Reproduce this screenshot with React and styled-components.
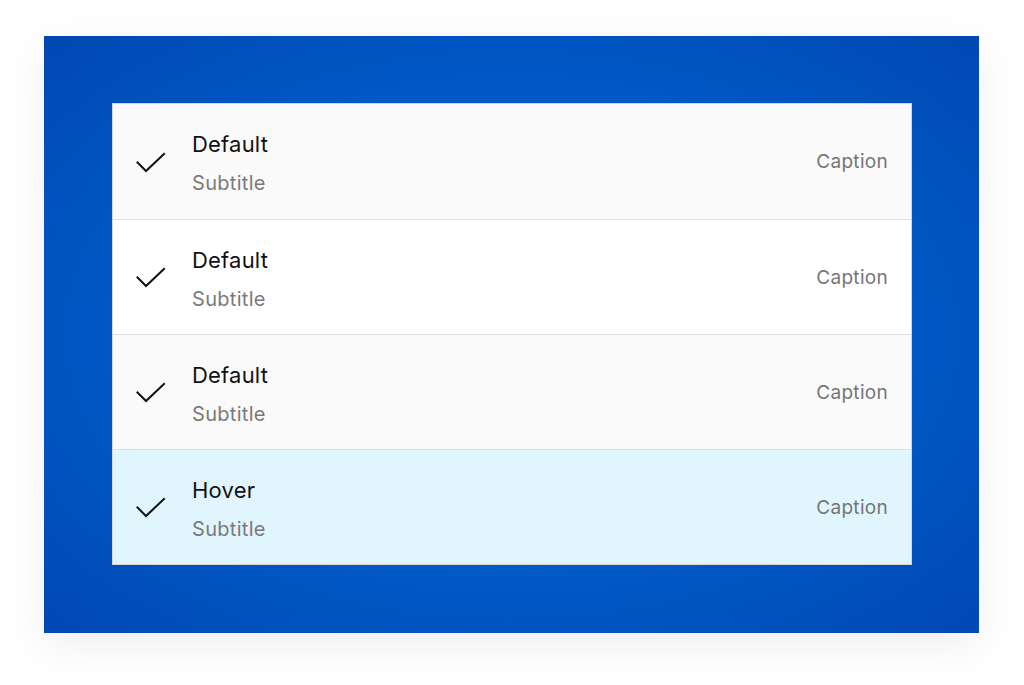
import React from "react";
import styled, { createGlobalStyle } from "styled-components";

const GlobalStyle = createGlobalStyle`
  body {
    margin: 0;
    background: #ffffff;
    font-family: "Inter", "Liberation Sans", sans-serif;
  }
`;

const items = [
  { title: "Default", subtitle: "Subtitle", caption: "Caption", tone: "muted" },
  { title: "Default", subtitle: "Subtitle", caption: "Caption", tone: "plain" },
  { title: "Default", subtitle: "Subtitle", caption: "Caption", tone: "muted" },
  { title: "Hover", subtitle: "Subtitle", caption: "Caption", tone: "hover" },
];

const tones = {
  muted: "#fafafa",
  plain: "#ffffff",
  hover: "#e1f5fe",
};

const CheckIcon = () => (
  <svg width="32" height="24" viewBox="0 0 32 24" fill="none">
    <polyline
      points="2.5,10.5 11,19 29,2"
      stroke="#111"
      strokeWidth="2"
      strokeLinecap="square"
    />
  </svg>
);

const App = () => {
  return (
    <>
      <GlobalStyle />
      <Page>
        <Panel>
          <List>
            {items.map((item, i) => (
              <Row key={i} $tone={item.tone}>
                <IconCell>
                  <CheckIcon />
                </IconCell>
                <Text>
                  <Title>{item.title}</Title>
                  <Subtitle>{item.subtitle}</Subtitle>
                </Text>
                <Caption>{item.caption}</Caption>
              </Row>
            ))}
          </List>
        </Panel>
      </Page>
    </>
  );
};

export default App;

const Page = styled.div`
  padding: 36px 0 0 44px;
  height: 685px;
  box-sizing: border-box;
`;

const Panel = styled.div`
  width: 935px;
  height: 597px;
  box-sizing: border-box;
  padding: 67px 67px 67px 68px;

  background: radial-gradient(
    ellipse at center,
    #006ad9 0%,
    #005cca 50%,
    #0048b3 100%
  );

  box-shadow: 0 12px 40px rgba(0, 0, 0, 0.07);
`;

const List = styled.div`
  display: flex;
  flex-direction: column;
  border: 1px solid #d6d6d6;
  background: #fff;
`;

const Row = styled.div`
  display: flex;
  align-items: center;
  height: 115px;
  box-sizing: border-box;
  padding: 0 23px 0 22px;

  background: ${(p) => tones[p.$tone]};
  border-top: 1px solid #e0e0e0;

  &:first-child {
    border-top: none;
  }
`;

const IconCell = styled.div`
  width: 57px;
  display: flex;
  align-items: center;
  margin-top: 4px;
`;

const Text = styled.div`
  flex: 1;
  display: flex;
  flex-direction: column;
  gap: 11px;
  margin-top: 4px;
`;

const Title = styled.div`
  font-size: 22px;
  line-height: 28px;
  color: #111;
  letter-spacing: 0.2px;
`;

const Subtitle = styled.div`
  font-size: 20px;
  line-height: 28px;
  color: #7a7a7a;
  letter-spacing: 0.3px;
`;

const Caption = styled.div`
  font-size: 19px;
  color: #757575;
  letter-spacing: 0.3px;
`;
